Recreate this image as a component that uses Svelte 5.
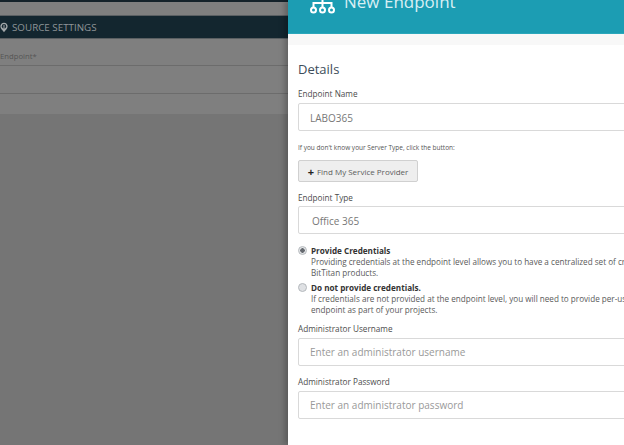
<script lang="ts">
  let credentials = $state('provide');
</script>

<div class="page">
  <section class="backdrop">
    <div class="top-strip"></div>
    <div class="band"></div>
    <h2 class="source-head">
      <svg width="8" height="11" viewBox="0 0 11 14" aria-hidden="true">
        <path d="M5.5 0.5C2.6 0.5 0.5 2.7 0.5 5.4C0.5 8.6 3.6 11 5.5 13.5C7.4 11 10.5 8.6 10.5 5.4C10.5 2.7 8.4 0.5 5.5 0.5Z" fill="#a3a8aa" />
        <circle cx="5.5" cy="5.3" r="3" fill="#13262f" />
        <rect x="4.8" y="3.4" width="1.4" height="5" fill="#a3a8aa" />
      </svg>
      SOURCE SETTINGS
    </h2>
    <div class="field-row label-row">Endpoint*</div>
    <div class="field-row empty-row"></div>
    <div class="field-row last-row"></div>
  </section>

  <aside class="panel">
    <header class="panel-head">
      <svg class="endpoint-icon" width="25" height="14" viewBox="0 0 25 14" aria-hidden="true">
        <g fill="none" stroke="#fff" stroke-width="2">
          <circle cx="3.5" cy="10" r="2.5" />
          <circle cx="12.5" cy="10" r="2.5" />
          <circle cx="21.5" cy="10" r="2.5" />
          <path d="M3.5 7.5V3H21.5V7.5M12.5 0V7.5" />
        </g>
      </svg>
      <h1>New Endpoint</h1>
    </header>
    <div class="sub-strip"></div>

    <form class="details">
      <h3>Details</h3>

      <label class="name-label" for="endpoint-name">Endpoint Name</label>
      <input id="endpoint-name" class="text-input value" value="LABO365" />

      <p class="hint">If you don't know your Server Type, click the button:</p>
      <button type="button" class="find-btn"><span class="plus">+</span> Find My Service Provider</button>

      <label class="type-label" for="endpoint-type">Endpoint Type</label>
      <div id="endpoint-type" class="text-input select-value">Office 365</div>

      <div class="radio-group">
        <label class="radio">
          <input type="radio" bind:group={credentials} value="provide" />
          <span class="radio-text">
            <strong>Provide Credentials</strong>
            <span>Providing credentials at the endpoint level allows you to have a centralized set of credentials for all</span>
            <span>BitTitan products.</span>
          </span>
        </label>
        <label class="radio">
          <input type="radio" bind:group={credentials} value="none" />
          <span class="radio-text">
            <strong>Do not provide credentials.</strong>
            <span>If credentials are not provided at the endpoint level, you will need to provide per-user credentials for this</span>
            <span>endpoint as part of your projects.</span>
          </span>
        </label>
      </div>

      <label class="user-label" for="admin-user">Administrator Username</label>
      <input id="admin-user" class="text-input" placeholder="Enter an administrator username" />

      <label class="pass-label" for="admin-pass">Administrator Password</label>
      <input id="admin-pass" class="text-input" placeholder="Enter an administrator password" />
    </form>
  </aside>
</div>

<style>
  :global(body) {
    margin: 0;
    overflow: hidden;
  }
  .page {
    display: flex;
    width: 624px;
    height: 445px;
    overflow: hidden;
    font-family: 'Open Sans', sans-serif;
    background: #757575;
  }

  .backdrop {
    flex: 0 0 288px;
    display: flex;
    flex-direction: column;
    overflow: hidden;
  }
  .top-strip {
    height: 2px;
    background: #14222a;
  }
  .band {
    height: 13px;
    background: #7f7f7f;
  }
  .source-head {
    display: flex;
    align-items: center;
    gap: 4px;
    box-sizing: border-box;
    height: 24px;
    margin: 0;
    border-top: 1px solid #5a5f62;
    border-bottom: 1px solid #5a5f62;
    background: #13262f;
    color: #8f9598;
    font-size: 9.8px;
    font-weight: 400;
    white-space: nowrap;
  }
  .source-head svg {
    flex: none;
  }
  .field-row {
    box-sizing: border-box;
    background: #7f7f7f;
    border-bottom: 1px solid #6c6c6c;
  }
  .label-row {
    height: 27px;
    padding-top: 10px;
    color: #555;
    font-size: 7.7px;
    line-height: 15px;
  }
  .empty-row {
    height: 28px;
  }
  .last-row {
    height: 20px;
    border: 0;
  }

  .panel {
    flex: 1 0 0;
    min-width: 0;
    display: flex;
    flex-direction: column;
    background: #fff;
    overflow: hidden;
    box-shadow: -3px 0 6px rgba(0, 0, 0, 0.25);
  }
  .panel-head {
    flex: 0 0 34px;
    box-sizing: border-box;
    display: flex;
    align-items: flex-start;
    gap: 9px;
    padding-left: 22px;
    background: #1c9db3;
    border-bottom: 1px solid #2ba7bb;
    overflow: hidden;
  }
  .endpoint-icon {
    flex: none;
  }
  h1 {
    margin: -8px 0 0;
    color: #d8eff3;
    font-size: 17px;
    font-weight: 400;
    line-height: 20px;
    white-space: nowrap;
  }
  .sub-strip {
    flex: 0 0 11px;
    background: #f8f8f8;
  }
  .details {
    display: flex;
    flex-direction: column;
    align-items: flex-start;
    padding: 15px 0 0 10px;
    color: #444;
  }
  h3 {
    margin: 0;
    color: #3d4d5a;
    font-size: 13px;
    font-weight: 400;
    line-height: 18px;
  }
  label {
    font-size: 8.2px;
    line-height: 12px;
    color: #4c4c4c;
  }
  .name-label {
    margin-top: 10px;
  }
  .text-input {
    box-sizing: border-box;
    flex: none;
    width: 340px;
    height: 28px;
    margin-top: 3px;
    padding: 0 11px;
    border: 1px solid #d9d9d9;
    border-radius: 2px;
    background: #fff;
    font-family: inherit;
    font-size: 10px;
    color: #777;
    outline: none;
  }
  .text-input::placeholder {
    color: #999;
    opacity: 1;
  }
  .value {
    padding-top: 2px;
  }
  .select-value {
    display: flex;
    align-items: center;
    padding: 2px 11px 0 13px;
    margin-top: 2px;
  }
  .hint {
    margin: 12px 0 0;
    font-size: 6.5px;
    line-height: 10px;
    color: #555;
  }
  .find-btn {
    display: flex;
    align-items: center;
    justify-content: center;
    gap: 3px;
    height: 22px;
    width: 120px;
    margin-top: 7px;
    padding: 0;
    border: 1px solid #d0d0d0;
    border-radius: 2px;
    background: #eeeeee;
    font-family: inherit;
    font-size: 8px;
    color: #5c5c5c;
    white-space: nowrap;
  }
  .plus {
    color: #222;
    font-weight: 700;
    font-size: 11px;
    line-height: 11px;
  }
  .type-label {
    margin-top: 10px;
  }
  .radio-group {
    display: flex;
    flex-direction: column;
    gap: 4px;
    margin-top: 11px;
  }
  .radio {
    display: flex;
    gap: 4px;
  }
  .radio input {
    appearance: none;
    box-sizing: border-box;
    width: 9px;
    height: 9px;
    margin: 1px 0 0;
    border: 1px solid #b5b9bd;
    border-radius: 50%;
    background: #dfe1e4;
    flex: none;
  }
  .radio input:checked {
    background: radial-gradient(circle, #666a70 0 2px, #e4e6e8 2.5px);
  }
  .radio-text {
    display: flex;
    flex-direction: column;
    white-space: nowrap;
    font-size: 8.15px;
    line-height: 11px;
    color: #5a5a5a;
  }
  .radio-text strong {
    color: #333;
    font-weight: 700;
  }
  .user-label {
    margin-top: 8px;
  }
  .pass-label {
    margin-top: 10px;
  }
</style>
